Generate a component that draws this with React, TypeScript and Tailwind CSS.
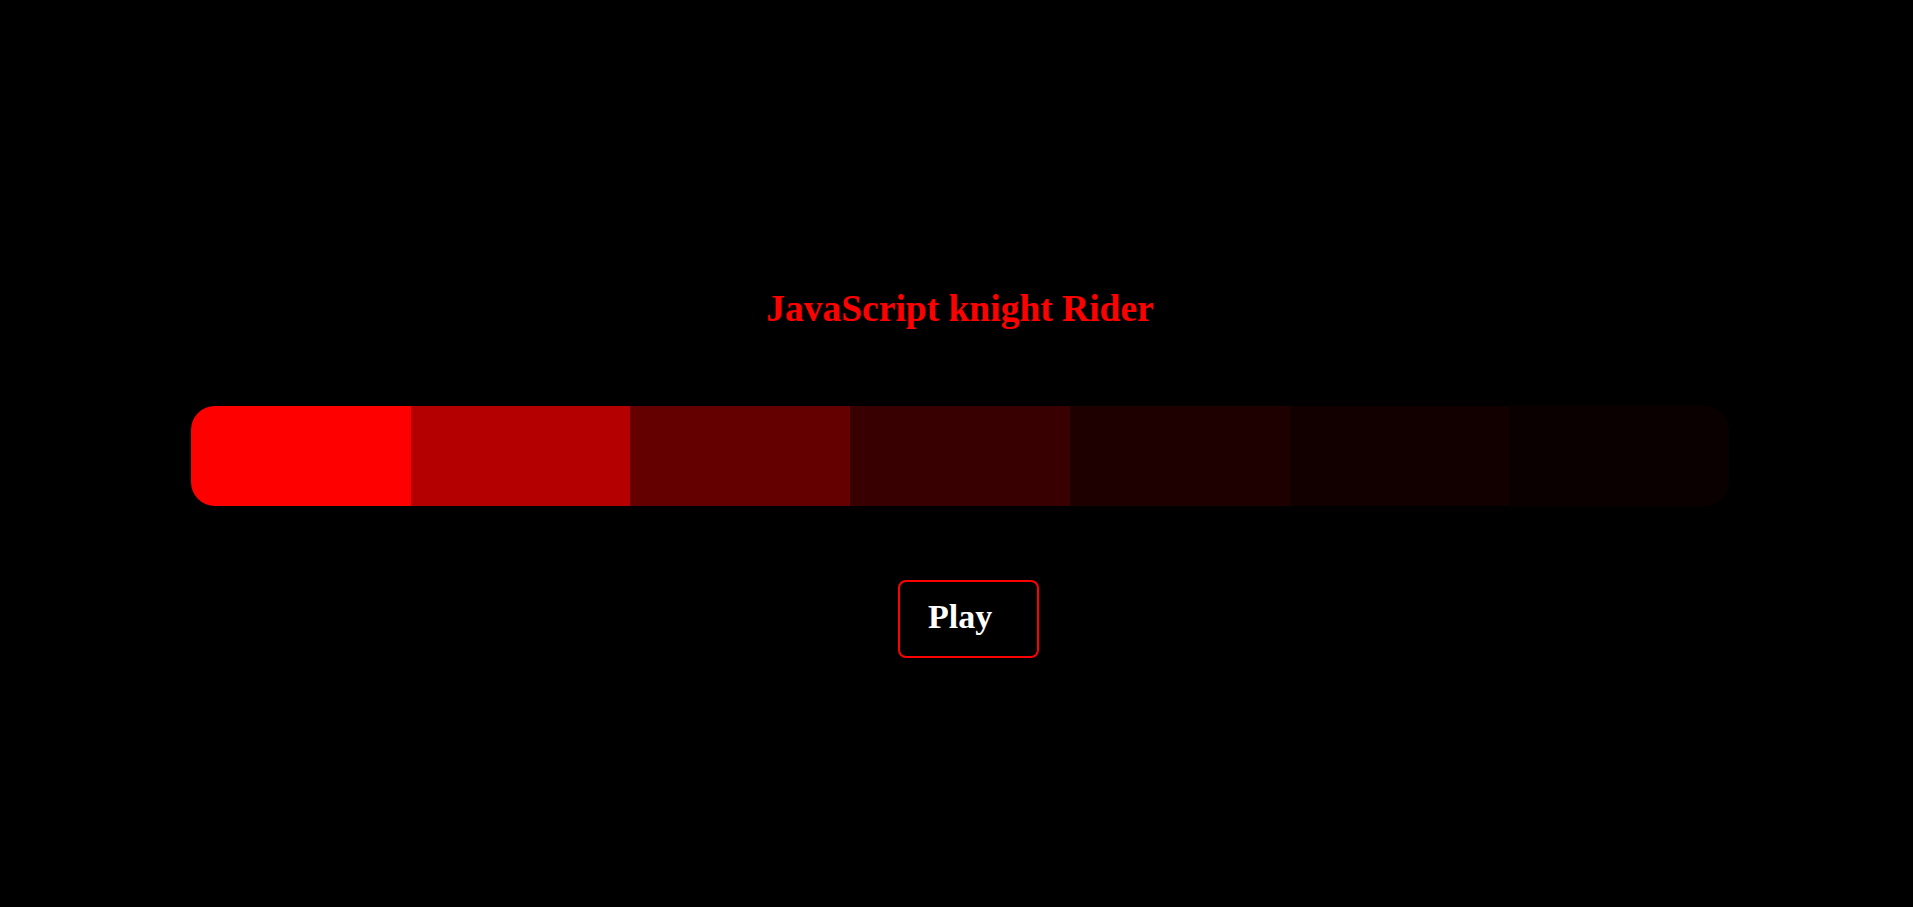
const lights = ['bg-[#ff0000]', 'bg-[#b40000]', 'bg-[#640000]', 'bg-[#380000]', 'bg-[#1f0000]', 'bg-[#120000]', 'bg-[#0b0000]'];

export default function App() {
  return (
    <div className="flex min-h-screen flex-col items-center bg-black pl-[7px] pt-[290px] font-['Liberation_Serif',serif]">
      <h1 className="text-[37.5px] font-bold leading-none text-[#ff0000]">JavaScript knight Rider</h1>

      <div className="mt-[78px] flex h-[100px] w-[1538px] overflow-hidden rounded-[24px]">
        {lights.map((c, i) => (
          <div key={i} className={`flex-1 ${c}`} />
        ))}
      </div>

      <button className="ml-[17px] mt-[74px] w-[141px] rounded-lg border-2 border-[#ff0000] bg-black pb-[22px] pl-[28px] pt-[18px] text-left text-[34px] font-bold leading-none text-white">
        Play
      </button>
    </div>
  );
}
